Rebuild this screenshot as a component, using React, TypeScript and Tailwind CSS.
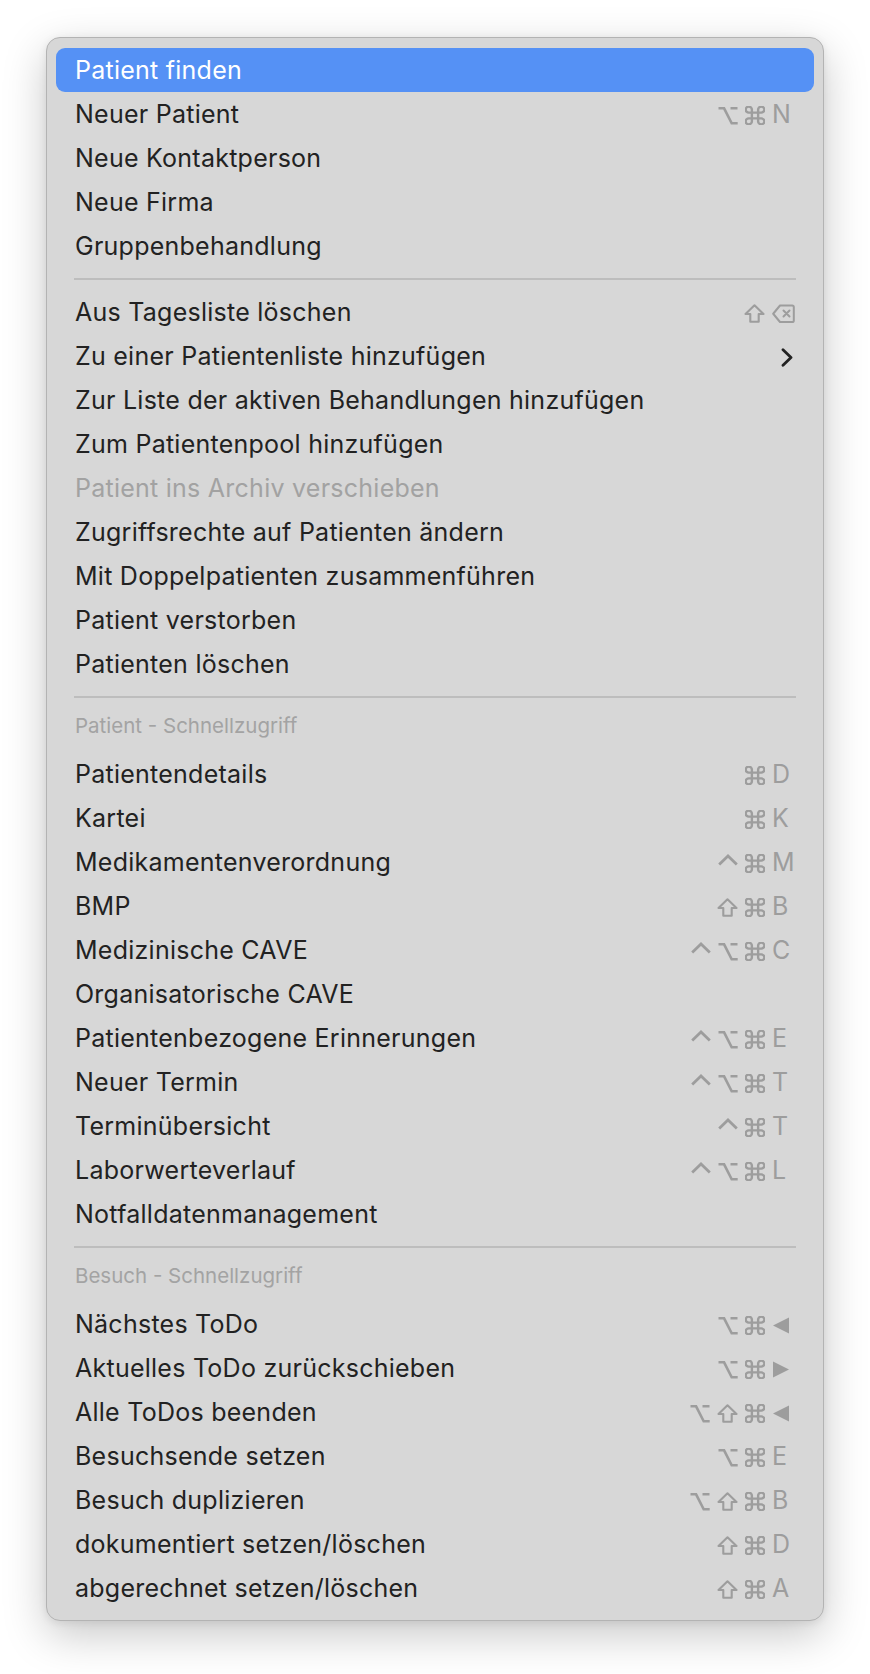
import React from "react";

type Mod = "opt" | "cmd" | "shift" | "ctrl";
type Key = string | "left" | "right" | "del";

type Item =
  | { type: "item"; label: string; mods?: Mod[]; k?: Key; disabled?: boolean; active?: boolean; submenu?: boolean }
  | { type: "sep" }
  | { type: "header"; label: string };

const items: Item[] = [
  { type: "item", label: "Patient finden", active: true },
  { type: "item", label: "Neuer Patient", mods: ["opt", "cmd"], k: "N" },
  { type: "item", label: "Neue Kontaktperson" },
  { type: "item", label: "Neue Firma" },
  { type: "item", label: "Gruppenbehandlung" },
  { type: "sep" },
  { type: "item", label: "Aus Tagesliste löschen", mods: ["shift"], k: "del" },
  { type: "item", label: "Zu einer Patientenliste hinzufügen", submenu: true },
  { type: "item", label: "Zur Liste der aktiven Behandlungen hinzufügen" },
  { type: "item", label: "Zum Patientenpool hinzufügen" },
  { type: "item", label: "Patient ins Archiv verschieben", disabled: true },
  { type: "item", label: "Zugriffsrechte auf Patienten ändern" },
  { type: "item", label: "Mit Doppelpatienten zusammenführen" },
  { type: "item", label: "Patient verstorben" },
  { type: "item", label: "Patienten löschen" },
  { type: "sep" },
  { type: "header", label: "Patient - Schnellzugriff" },
  { type: "item", label: "Patientendetails", mods: ["cmd"], k: "D" },
  { type: "item", label: "Kartei", mods: ["cmd"], k: "K" },
  { type: "item", label: "Medikamentenverordnung", mods: ["ctrl", "cmd"], k: "M" },
  { type: "item", label: "BMP", mods: ["shift", "cmd"], k: "B" },
  { type: "item", label: "Medizinische CAVE", mods: ["ctrl", "opt", "cmd"], k: "C" },
  { type: "item", label: "Organisatorische CAVE" },
  { type: "item", label: "Patientenbezogene Erinnerungen", mods: ["ctrl", "opt", "cmd"], k: "E" },
  { type: "item", label: "Neuer Termin", mods: ["ctrl", "opt", "cmd"], k: "T" },
  { type: "item", label: "Terminübersicht", mods: ["ctrl", "cmd"], k: "T" },
  { type: "item", label: "Laborwerteverlauf", mods: ["ctrl", "opt", "cmd"], k: "L" },
  { type: "item", label: "Notfalldatenmanagement" },
  { type: "sep" },
  { type: "header", label: "Besuch - Schnellzugriff" },
  { type: "item", label: "Nächstes ToDo", mods: ["opt", "cmd"], k: "left" },
  { type: "item", label: "Aktuelles ToDo zurückschieben", mods: ["opt", "cmd"], k: "right" },
  { type: "item", label: "Alle ToDos beenden", mods: ["opt", "shift", "cmd"], k: "left" },
  { type: "item", label: "Besuchsende setzen", mods: ["opt", "cmd"], k: "E" },
  { type: "item", label: "Besuch duplizieren", mods: ["opt", "shift", "cmd"], k: "B" },
  { type: "item", label: "dokumentiert setzen/löschen", mods: ["shift", "cmd"], k: "D" },
  { type: "item", label: "abgerechnet setzen/löschen", mods: ["shift", "cmd"], k: "A" },
];

const GRAY = "#9d9d9d";

function ModIcon({ m }: { m: Mod }) {
  const common = {
    fill: "none",
    stroke: GRAY,
    strokeLinecap: "round" as const,
    strokeLinejoin: "round" as const,
  };
  if (m === "cmd") {
    return (
      <svg width="20" height="19" viewBox="2.4 2.4 19.2 19.2" preserveAspectRatio="none" className="block">
        <path
          {...common}
          strokeWidth={2.3}
          d="M15 6v12a3 3 0 1 0 3-3H6a3 3 0 1 0 3 3V6a3 3 0 1 0-3 3h12a3 3 0 1 0-3-3"
        />
      </svg>
    );
  }
  if (m === "opt") {
    return (
      <svg width="20" height="19" viewBox="0 0 20 19" className="block">
        <path {...common} strokeLinecap="butt" strokeLinejoin="miter" strokeWidth={2.6} d="M0.5 2.3h5.6l7.6 15h6M12.5 2.3h7" />
      </svg>
    );
  }
  if (m === "shift") {
    return (
      <svg width="21" height="19" viewBox="0 0 21 19" className="block">
        <path {...common} strokeWidth={2.1} d="M10.5 1.3 19.5 10h-4.8v7.8H6.3V10H1.5z" />
      </svg>
    );
  }
  return (
    <svg width="20" height="19" viewBox="0 0 20 19" className="block">
      <path {...common} strokeLinecap="butt" strokeLinejoin="miter" strokeWidth={2.8} d="M1.2 10.5 10 2l8.8 8.5" />
    </svg>
  );
}

function KeyCell({ k }: { k: Key }) {
  if (k === "left") {
    return (
      <svg width="18" height="19" viewBox="0 0 18 19" className="block mt-[3px]">
        <path fill={GRAY} d="M17 1.5v16L1 9.5z" />
      </svg>
    );
  }
  if (k === "right") {
    return (
      <svg width="18" height="19" viewBox="0 0 18 19" className="block mt-[3px]">
        <path fill={GRAY} d="M1 1.5v16l16-8z" />
      </svg>
    );
  }
  if (k === "del") {
    return (
      <svg width="23" height="20" viewBox="0 0 23 20" className="block mt-[3px]">
        <path
          fill="none"
          stroke={GRAY}
          strokeWidth={2}
          strokeLinejoin="round"
          d="M8 1.5h12.2a1.6 1.6 0 0 1 1.6 1.6v13.3a1.6 1.6 0 0 1-1.6 1.6H8L1.2 9.75z"
        />
        <path fill="none" stroke={GRAY} strokeWidth={2} strokeLinecap="round" d="M11.5 6.5l6 6M17.5 6.5l-6 6" />
      </svg>
    );
  }
  return <span className="text-[#9d9d9d]">{k}</span>;
}

function Row({ it }: { it: Extract<Item, { type: "item" }> }) {
  const textColor = it.active ? "text-white" : it.disabled ? "text-[#a2a2a2]" : "text-[#222222]";
  return (
    <div
      className={
        "flex items-center justify-between h-[44px] leading-[44px] pl-[19px] pr-[18px] rounded-[9px] " +
        (it.active ? "bg-[#5591f5] " : "") +
        textColor
      }
    >
      <span className="whitespace-nowrap tracking-[0.25px]">{it.label}</span>
      {it.mods || it.k ? (
        <div className="flex items-center h-full">
          <div className="flex items-center gap-[7px] mt-[3px]">
            {(it.mods || []).map((m, i) => (
              <ModIcon key={i} m={m} />
            ))}
          </div>
          <div className="w-[24px] ml-[7px] flex items-center">{it.k ? <KeyCell k={it.k} /> : null}</div>
        </div>
      ) : it.submenu ? (
        <svg width="12" height="19" viewBox="0 0 12 19" className="block mt-[3px] mr-[3px]">
          <path fill="none" stroke="#222222" strokeWidth={2.8} strokeLinecap="round" strokeLinejoin="round" d="M2 1.8l8 7.7-8 7.7" />
        </svg>
      ) : null}
    </div>
  );
}

export default function App() {
  return (
    <div className="min-h-[1674px] w-full bg-white pt-[37px] pl-[46px]" style={{ fontFamily: "Inter, 'Noto Sans', sans-serif" }}>
      <div className="w-[778px] rounded-[14px] border border-[#b3b3b3] bg-[#d7d7d7] px-[9px] py-[10px] shadow-[0_14px_44px_rgba(0,0,0,0.22),0_2px_8px_rgba(0,0,0,0.08)] text-[25px]">
        {items.map((it, i) => {
          if (it.type === "sep") {
            return (
              <div key={i} className="h-[22px] flex items-center px-[18px]">
                <div className="h-[2px] w-full bg-[#bdbdbd]" />
              </div>
            );
          }
          if (it.type === "header") {
            return (
              <div key={i} className="h-[44px] pl-[19px]">
                <span className="block leading-[36px] text-[20.5px] text-[#a3a3a3]">{it.label}</span>
              </div>
            );
          }
          return <Row key={i} it={it} />;
        })}
      </div>
    </div>
  );
}
